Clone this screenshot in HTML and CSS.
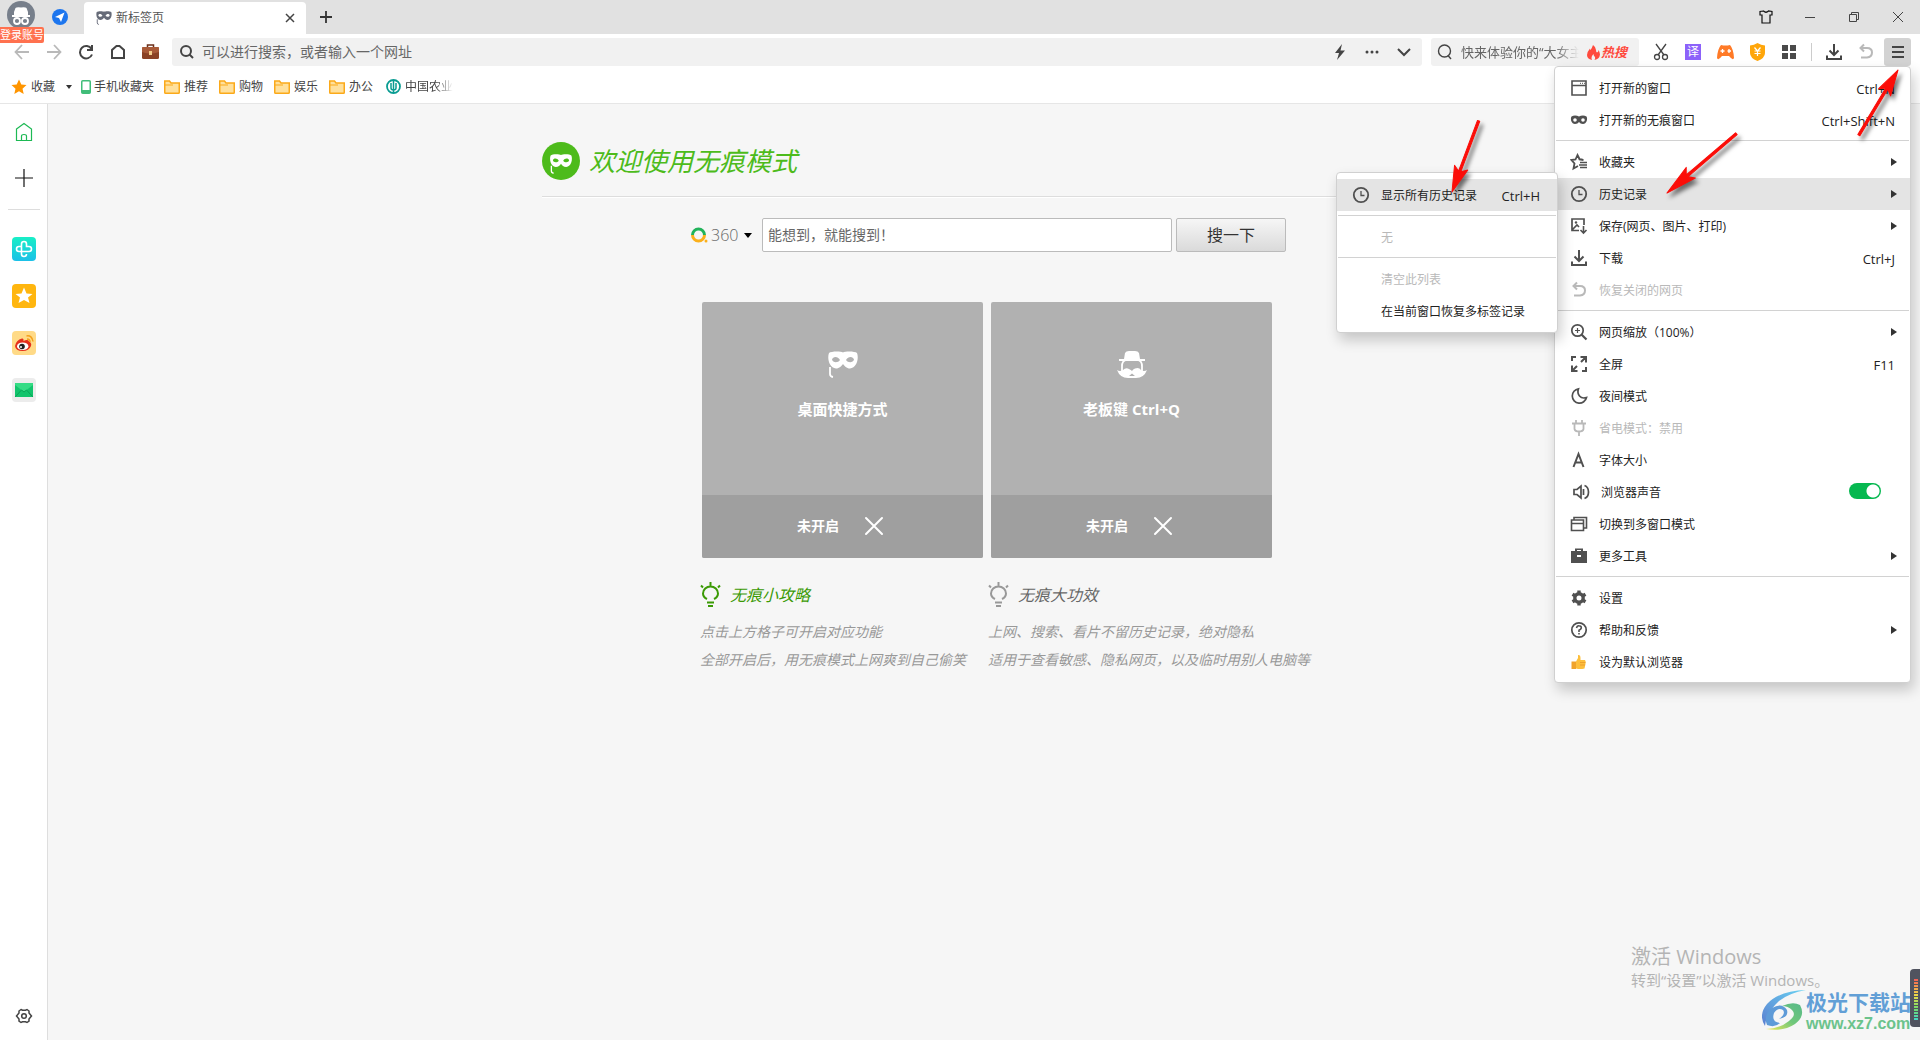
FILE: index.html
```html
<!DOCTYPE html>
<html lang="zh-CN">
<head>
<meta charset="utf-8">
<meta name="viewport" content="width=device-width, initial-scale=1">
<title>新标签页</title>
<link rel="stylesheet" href="styles.css">
</head>
<body>
<svg class="sprite" aria-hidden="true">
  <symbol id="mask" viewBox="0 0 30 27"><path fill="currentColor" fill-rule="evenodd" d="M1 2C3 0 13 0 15 1.500C17 0 27 0 29 2C31 7 29 17 22 17.500C18.500 17.500 16.500 15 15 13C13.500 15 11.500 17.500 8 17.500C1 17 -1 7 1 2ZM4 8.500C5 12 10 12 12 9C10 5 5 5 4 8.500ZM18 9C20 12 25 12 26 8.500C25 5 20 5 18 9Z"/><path d="M2 16V23Q2 25.500 5 26" fill="none" stroke="currentColor" stroke-width="1.800"/></symbol>
  <symbol id="goggles" viewBox="0 0 18 18"><path fill="currentColor" fill-rule="evenodd" d="M1.500 5.500C4 4 7 4.500 9 5.500C11 4.500 14 4 16.500 5.500C18 8 16.500 13 13 13C11 13 10 12 9 11C8 12 7 13 5 13C1.500 13 0 8 1.500 5.500ZM5 7.200A1.800 1.800 0 1 0 5 10.800A1.800 1.800 0 0 0 5 7.200ZM13 7.200A1.800 1.800 0 1 0 13 10.800A1.800 1.800 0 0 0 13 7.200Z"/></symbol>
  <symbol id="folder" viewBox="0 0 16 14"><path d="M.75 12.500V1H5.500L7 3H15.250V12.500Q15.250 13.250 14.500 13.250H1.500Q.75 13.250.75 12.500Z" fill="#ffe09c" stroke="#fba919" stroke-width="1.500"/><path d="M1 5H9" stroke="#fba919"/></symbol>
  <symbol id="search" viewBox="0 0 16 16"><circle cx="7" cy="7" r="5" fill="none" stroke="currentColor" stroke-width="2"/><path d="M10.500 10.500L14 14" stroke="currentColor" stroke-width="2"/></symbol>
  <symbol id="down" viewBox="0 0 18 18"><path d="M9 1V12M4.500 7.500L9 12L13.500 7.500M2 12.500V16H16V12.500" fill="none" stroke="currentColor" stroke-width="2"/></symbol>
  <symbol id="undo" viewBox="0 0 18 18"><path d="M7 1.500L3.500 5L7 8.500M4 5H10Q15 5 15 9.500T10 14.500H4" fill="none" stroke="currentColor" stroke-width="2"/></symbol>
  <symbol id="clock" viewBox="0 0 18 18"><circle cx="9" cy="9" r="7.200" fill="none" stroke="currentColor" stroke-width="1.800"/><path d="M9 5V9.500H12.500" fill="none" stroke="currentColor" stroke-width="1.300"/></symbol>
  <symbol id="bulb" viewBox="0 0 22 26"><g fill="none" stroke="currentColor" stroke-width="2"><path d="M7 17Q3 15 3 11.500A7.500 7 0 0 1 18 11.500Q18 15 14 17M7 20.500H14M8 24H13M10.500 0V3.500M1 3.500L3 5.500M20 3.500L18 5.500"/></g></symbol>
  <symbol id="x" viewBox="0 0 20 20"><path d="M2 2L18 18M18 2L2 18" stroke="currentColor" stroke-width="2" stroke-linecap="round"/></symbol>
</svg>

<header class="titlebar">
  <button class="account" aria-label="登录账号">
    <svg width="28" height="28" viewBox="0 0 28 28"><circle cx="14" cy="14" r="14" fill="#777f8b"/><path d="M7 14V11L8.500 7Q9.500 6 14 6.500Q18.500 6 19.500 7L21 11V14H23V16H5V14Z" fill="#fff"/><circle cx="10" cy="20" r="3" fill="none" stroke="#fff" stroke-width="1.800"/><circle cx="18" cy="20" r="3" fill="none" stroke="#fff" stroke-width="1.800"/></svg>
    <span class="login-tip">登录账号</span>
  </button>
  <button class="plane" aria-label="导航"><svg width="16" height="16" viewBox="0 0 16 16"><circle cx="8" cy="8" r="8" fill="#1d76ee"/><path d="M12.500 3.500L3 8L7 9L9 13Z" fill="#fff"/></svg></button>
  <div class="tab"><svg class="tab-icon" width="16" height="14"><use href="#mask"/></svg><span>新标签页</span><button aria-label="关闭标签"><svg width="10" height="10" viewBox="0 0 10 10"><path d="M1 1L9 9M9 1L1 9" stroke="#444" stroke-width="1.500"/></svg></button></div>
  <button class="newtab" aria-label="新建标签"><svg width="12" height="12" viewBox="0 0 12 12"><path d="M6 0V12M0 6H12" stroke="#333" stroke-width="1.800"/></svg></button>
  <div class="window-controls">
    <button aria-label="皮肤"><svg width="14" height="14" viewBox="0 0 14 14"><path d="M4.500 1L1 1.500V5H3V13H11V5H13V1.500L9.500 1Q7 3.500 4.500 1Z" fill="none" stroke="#111" stroke-width="1.200"/></svg></button>
    <button aria-label="最小化"><svg width="12" height="12" viewBox="0 0 12 12"><path d="M1 6.500H11" stroke="#444"/></svg></button>
    <button aria-label="还原"><svg width="12" height="12" viewBox="0 0 12 12"><path d="M1.500 3.500H8.500V10.500H1.500ZM3.500 3V1.500H10.500V8.500H9" fill="none" stroke="#444"/></svg></button>
    <button aria-label="关闭"><svg width="12" height="12" viewBox="0 0 12 12"><path d="M1 1L11 11M11 1L1 11" stroke="#444"/></svg></button>
  </div>
</header>

<div class="toolbar">
  <div class="nav">
    <button class="off" aria-label="后退"><svg width="16" height="16" viewBox="0 0 16 16"><path d="M8 1L1.500 8L8 15M2 8H15" fill="none" stroke="currentColor" stroke-width="1.800"/></svg></button>
    <button class="off" aria-label="前进"><svg width="16" height="16" viewBox="0 0 16 16"><path d="M8 1L14.500 8L8 15M14 8H1" fill="none" stroke="currentColor" stroke-width="1.800"/></svg></button>
    <button aria-label="刷新"><svg width="16" height="16" viewBox="0 0 16 16"><path d="M13.500 5A6.200 6.200 0 1 0 14 10.500M14 1V6H9" fill="none" stroke="currentColor" stroke-width="2"/></svg></button>
    <button aria-label="主页"><svg width="16" height="16" viewBox="0 0 16 16"><path d="M2 14V6L6.500 2H9.500L14 6V14Z" fill="none" stroke="currentColor" stroke-width="2"/></svg></button>
    <button aria-label="工具箱"><svg width="17" height="16" viewBox="0 0 17 16"><path d="M5.500 3V1H11.500V3" fill="none" stroke="#6b2f1a" stroke-width="1.500"/><rect x="0" y="3" width="17" height="12" rx="1.500" fill="#8a4225"/><path d="M0 4Q0 3 1 3H16Q17 3 17 4V8Q8 11 0 8Z" fill="#a85a38"/><rect x="7" y="7" width="3" height="4" fill="#f4cf8d"/></svg></button>
  </div>
  <div class="address">
    <svg width="16" height="16"><use href="#search"/></svg>
    <input type="text" aria-label="地址栏" placeholder="可以进行搜索，或者输入一个网址">
    <button aria-label="极速模式"><svg width="14" height="16" viewBox="0 0 14 16"><path d="M9 0L2 9H6L4 16L12 6.500H7.500Z" fill="#444"/></svg></button>
    <button aria-label="更多"><svg width="14" height="4" viewBox="0 0 14 4"><g fill="#444"><circle cx="2" cy="2" r="1.500"/><circle cx="7" cy="2" r="1.500"/><circle cx="12" cy="2" r="1.500"/></g></svg></button>
    <button aria-label="展开"><svg width="14" height="10" viewBox="0 0 14 10"><path d="M1 2L7 8L13 2" fill="none" stroke="#444" stroke-width="2"/></svg></button>
  </div>
  <div class="quick">
    <svg width="16" height="16" viewBox="0 0 16 16"><circle cx="7.500" cy="7" r="6" fill="none" stroke="#444" stroke-width="1.400"/><path d="M11 11.500L14 15" stroke="#444" stroke-width="1.400"/></svg>
    <input type="text" aria-label="搜索栏" placeholder="快来体验你的“大女主">
    <a href="#hot"><svg width="13" height="15" viewBox="0 0 13 15"><path d="M6 0Q5 3 3.500 5Q3 4.500 3 3.500Q0 7 0 10Q0 14 5 15Q3.500 12 6.500 9Q6.500 11 8 12Q8.500 13.500 7.500 15Q12.500 14 13 9.500Q12.500 6 11.500 5Q11.500 7 10 7.500Q9 7 9 5Q9 2 6 0Z" fill="#ff4a3d"/></svg>热搜</a>
  </div>
  <div class="tools">
    <button aria-label="截图"><svg width="16" height="18" viewBox="0 0 16 18"><g fill="none" stroke="#444" stroke-width="1.300"><path d="M3 1L11 12M13 1L5 12"/><circle cx="4" cy="14" r="2.500"/><circle cx="12" cy="14" r="2.500"/></g></svg></button>
    <button aria-label="翻译"><span class="translate">译</span></button>
    <button aria-label="游戏"><svg width="17" height="15" viewBox="0 0 17 15"><path d="M4 0Q8.500 1 13 0Q16.500 4 17 13Q16 16 12 11H5Q1 16 0 13Q.5 4 4 0Z" fill="#ff7a27"/><path d="M5.500 4V8M3.500 6H7.500M10.500 6H14M12 4V8" stroke="#fff" stroke-width="1.300"/></svg></button>
    <button aria-label="优惠"><svg width="15" height="18" viewBox="0 0 15 18"><path d="M7.500 0Q11 2 15 2.500V10Q15 15 7.500 18Q0 15 0 10V2.500Q4 2 7.500 0Z" fill="#ffa60a"/><path d="M4.500 4.500L7.500 8L10.500 4.500M4.500 8H10.500M4.500 10.500H10.500M7.500 8V13" fill="none" stroke="#fff" stroke-width="1.200"/></svg></button>
    <button aria-label="扩展"><svg width="14" height="16" viewBox="0 0 14 16"><path d="M0 1H6V7H0ZM8 1H14V7H8ZM0 9H6V15H0ZM8 9H14V15H8Z" fill="#4a4a4a"/></svg></button>
    <i class="divider"></i>
    <button aria-label="下载"><svg width="18" height="18"><use href="#down"/></svg></button>
    <button class="off" aria-label="恢复"><svg width="18" height="18"><use href="#undo"/></svg></button>
    <button class="menu-button" aria-label="菜单" aria-expanded="true"><svg width="12" height="14" viewBox="0 0 12 14"><path d="M0 2H12M0 7H12M0 12H12" stroke="#444" stroke-width="2"/></svg></button>
  </div>

  <nav class="menu" aria-label="主菜单">
    <button><svg viewBox="0 0 18 18"><path d="M2 2H16V16H2ZM2 6.500H16" fill="none" stroke="currentColor" stroke-width="1.600"/><path d="M10 4.300H15" stroke="currentColor" stroke-dasharray="1 1"/></svg><span>打开新的窗口</span><kbd>Ctrl+N</kbd></button>
    <button><svg><use href="#goggles"/></svg><span>打开新的无痕窗口</span><kbd>Ctrl+Shift+N</kbd></button>
    <hr>
    <button><svg viewBox="0 0 18 18"><path d="M12.500 6.500H9.800L7.500 2L5.500 6.500L1.500 7L4.500 10.500L3.500 15.500L8 13M7.500 2L9.500 6.500L13.500 7" fill="none" stroke="currentColor" stroke-width="1.800"/><path d="M10 9.500H17M9 12H17M10 14.500H17" stroke="currentColor" stroke-width="1.600"/></svg><span>收藏夹</span><i class="arrow"></i></button>
    <div class="has-sub">
      <button class="active" aria-expanded="true"><svg><use href="#clock"/></svg><span>历史记录</span><i class="arrow"></i></button>
      <div class="submenu">
        <button class="active"><svg><use href="#clock"/></svg><span>显示所有历史记录</span><kbd>Ctrl+H</kbd></button>
        <hr>
        <button disabled><svg></svg><span>无</span></button>
        <hr>
        <button disabled><svg></svg><span>清空此列表</span></button>
        <button><svg></svg><span>在当前窗口恢复多标签记录</span></button>
      </div>
    </div>
    <button><svg viewBox="0 0 18 18"><path d="M9 13.500H2V2H14V8M2 13L7 8L9 10" fill="none" stroke="currentColor" stroke-width="1.700"/><circle cx="6" cy="5.500" r="1.200" fill="currentColor"/><path d="M13.500 9V16M10.500 13L13.500 16L16.500 13" fill="none" stroke="currentColor" stroke-width="1.600"/></svg><span>保存(网页、图片、打印)</span><i class="arrow"></i></button>
    <button><svg><use href="#down"/></svg><span>下载</span><kbd>Ctrl+J</kbd></button>
    <button disabled><svg><use href="#undo"/></svg><span>恢复关闭的网页</span></button>
    <hr>
    <button><svg viewBox="0 0 18 18"><circle cx="7.500" cy="7.500" r="5.700" fill="none" stroke="currentColor" stroke-width="1.700"/><path d="M11.500 11.500L16.500 16.500" stroke="currentColor" stroke-width="2.200"/><path d="M7.500 5V10M5 7.500H10" stroke="currentColor" stroke-width="1.200"/></svg><span>网页缩放（100%）</span><i class="arrow"></i></button>
    <button><svg viewBox="0 0 18 18"><path d="M2 6V2H6M10.500 2H16V7.500M16 12V16H12M7.500 16H2V10.500M15.500 2.500L11 7M2.500 15.500L7 11" fill="none" stroke="currentColor" stroke-width="2"/></svg><span>全屏</span><kbd>F11</kbd></button>
    <button><svg viewBox="0 0 18 18"><path d="M8.500 1.800A7.200 7.200 0 1 0 16.500 10.500Q12 12 9.500 9T8.500 1.800Z" fill="none" stroke="currentColor" stroke-width="1.700"/></svg><span>夜间模式</span></button>
    <button disabled><svg viewBox="0 0 18 18"><path d="M2 4.500H16M4.500 5V10Q5 12.500 9 12.500Q13 12.500 13.500 10V5M6 1V5M12 1V5M9 12.500V17" fill="none" stroke="currentColor" stroke-width="1.800"/></svg><span>省电模式：禁用</span></button>
    <button><svg viewBox="0 0 18 18"><path d="M3.500 16L8.500 3L13.500 16M5 11.500H12" fill="none" stroke="currentColor" stroke-width="2"/></svg><span>字体大小</span></button>
    <label class="sound"><svg viewBox="0 0 18 18"><path d="M2 6.500H5L9 3V15L5 11.500H2Z" fill="none" stroke="currentColor" stroke-width="1.700"/><path d="M11.500 6V12M12.500 2.500Q16.500 4 16.500 9T12.500 15.500" fill="none" stroke="currentColor" stroke-width="1.700"/></svg><span>浏览器声音</span><input type="checkbox" checked></label>
    <button><svg viewBox="0 0 18 18"><path d="M1.500 5H13.500V15.500H1.500ZM4 4.500V2.500H16.500V13H14M1.500 8.500H13.500" fill="none" stroke="currentColor" stroke-width="1.600"/></svg><span>切换到多窗口模式</span></button>
    <button><svg viewBox="0 0 18 18"><path fill="currentColor" fill-rule="evenodd" d="M5 4V1.500H13V4H17V16H1V4ZM7 4H11V3H7ZM7 8V10H11V8Z"/></svg><span>更多工具</span><i class="arrow"></i></button>
    <hr>
    <button><svg viewBox="0 0 18 18"><circle cx="9" cy="9" r="4.200" fill="none" stroke="currentColor" stroke-width="3.400"/><path d="M9 1.500V4M9 14V16.500M2.500 5.200L4.700 6.500M13.300 11.500L15.500 12.800M2.500 12.800L4.700 11.500M13.300 6.500L15.500 5.200" stroke="currentColor" stroke-width="3.400"/></svg><span>设置</span></button>
    <button><svg viewBox="0 0 18 18"><circle cx="9" cy="9" r="7.200" fill="none" stroke="currentColor" stroke-width="1.700"/><path d="M6.500 7Q7 4.500 9 4.700Q11.500 4.800 11.300 7Q11 8.300 9 9.300V11M9 12V13.500" fill="none" stroke="currentColor" stroke-width="1.600"/></svg><span>帮助和反馈</span><i class="arrow"></i></button>
    <button><svg viewBox="0 0 18 18"><path d="M6 8.500L8 5V2Q10.500 1.500 10.500 5V7H15Q16 8 15.500 11L14.500 15.500Q10 16.500 6 15.500Z" fill="#fdbf3c"/><path d="M1.500 8.500H6V16H1.500Z" fill="#f0a32b"/><path d="M10 9.500H15.500M10 12H15" stroke="#e9982a" stroke-width=".8"/></svg><span>设为默认浏览器</span></button>
  </nav>
</div>

<nav class="bookmarks" aria-label="收藏栏">
  <a href="#fav" class="fav"><svg width="16" height="16" viewBox="0 0 16 16"><path d="M8 .5L10.300 5.500L15.500 6L11.500 9.700L12.700 15L8 12.200L3.300 15L4.500 9.700L.5 6L5.700 5.500Z" fill="#ff9500"/></svg>收藏</a>
  <button aria-label="展开收藏"></button>
  <a href="#phone" class="phone"><svg width="10" height="14" viewBox="0 0 10 14"><rect x=".75" y=".75" width="8.500" height="12.500" rx="1" fill="#fff" stroke="#41bd79" stroke-width="1.500"/><path d="M1 11.500H9" stroke="#41bd79" stroke-width="3"/></svg>手机收藏夹</a>
  <a href="#rec"><svg width="16" height="14"><use href="#folder"/></svg>推荐</a>
  <a href="#shop"><svg width="16" height="14"><use href="#folder"/></svg>购物</a>
  <a href="#fun"><svg width="16" height="14"><use href="#folder"/></svg>娱乐</a>
  <a href="#work"><svg width="16" height="14"><use href="#folder"/></svg>办公</a>
  <a href="#bank" class="bank"><svg width="15" height="15" viewBox="0 0 15 15"><circle cx="7.500" cy="7.500" r="6.500" fill="none" stroke="#0a9c92" stroke-width="1.800"/><path d="M7.500 1V14M5 4V9Q5 11 7.500 11Q10 11 10 9V4" fill="none" stroke="#0a9c92" stroke-width="1.500"/></svg><span>中国农业</span></a>
</nav>

<div class="body">
  <aside class="sidebar">
    <a href="#home" aria-label="首页"><svg width="18" height="20" viewBox="0 0 18 20"><path d="M1.500 7L9 1.500L16.500 7V18.500H1.500ZM6.500 18V14Q6.500 12.500 9 12.500T11.500 14V18" fill="none" stroke="#1db954" stroke-width="1.200"/></svg></a>
    <button aria-label="添加"><svg width="18" height="18" viewBox="0 0 18 18"><path d="M9 0V18M0 9H18" stroke="#111" stroke-width="1.200"/></svg></button>
    <hr>
    <div class="apps">
    <a href="#health" aria-label="健康"><svg width="24" height="24" viewBox="0 0 24 24"><defs><linearGradient id="g1" x2="0" y2="1"><stop stop-color="#18efc6"/><stop offset="1" stop-color="#1bc0e8"/></linearGradient></defs><rect width="24" height="24" rx="4" fill="url(#g1)"/><path d="M9.500 14V7Q9.500 4.500 12 4.500T14.500 7V9.500H17Q19.500 9.500 19.500 12T17 14.500H7Q4.500 14.500 4.500 12T7 9.500H9M9.500 14V17Q9.500 19.500 12 19.500T14.500 17" fill="none" stroke="#fff" stroke-width="1.600"/></svg></a>
    <a href="#star" aria-label="收藏夹"><svg width="24" height="24" viewBox="0 0 24 24"><rect width="24" height="24" rx="4" fill="#ffb60f"/><path d="M12 3.500L14.500 9.500L20.500 10L16 13.500L17.500 19L12 16L6.500 19L8 13.500L3.500 10L9.500 9.500Z" fill="#fff"/></svg></a>
    <a href="#weibo" aria-label="微博"><svg width="24" height="24" viewBox="0 0 24 24"><rect width="24" height="24" rx="4" fill="#ffda87"/><path d="M3 15Q4 9 10 7.500Q12 7 11.500 10Q16 8 17 10.500Q20 12 19 15Q17 20 10.500 20Q3.500 20 3 15Z" fill="#e5301c"/><ellipse cx="10.700" cy="15.200" rx="5.700" ry="3.800" fill="#fff"/><circle cx="10" cy="15.500" r="2.800" fill="#222"/><circle cx="9" cy="16" r="1" fill="#fff"/><path d="M14.500 5Q20 4 21 10.500M15 8Q18 8 18 11" fill="none" stroke="#f4a01c" stroke-width="1.500"/></svg></a>
    <a href="#mail" aria-label="邮箱"><svg width="24" height="24" viewBox="0 0 24 24"><rect width="24" height="24" rx="4" fill="#ececec"/><path d="M3 5H21V19H3Z" fill="#12c46c"/><path d="M3 5H21V7L12 14L3 7Z" fill="#35dc85"/><path d="M3 19L9.500 12L12 14L14.500 12L21 19" fill="none" stroke="#0aa457"/></svg></a>
    </div>
    <button class="gear" aria-label="设置"><svg width="18" height="18" viewBox="0 0 18 18"><path d="M6 2.500L7.500 3.200H10.500L12 2.500L14 4V6L16.500 9L14 12V14L12 15.500L10.500 14.800H7.500L6 15.500L4 14V12L1.500 9L4 6V4Z" fill="none" stroke="#444" stroke-width="1.500"/><circle cx="9" cy="9" r="2.300" fill="none" stroke="#444" stroke-width="1.500"/></svg></button>
  </aside>

  <main>
    <h1><svg width="38" height="38" viewBox="0 0 38 38"><circle cx="19" cy="19" r="19" fill="#4dbb1b"/><use href="#mask" x="7" y="12" width="24" height="20" color="#fff"/></svg>欢迎使用无痕模式</h1>
    <form class="search">
      <button type="button" class="engine"><svg width="17" height="16" viewBox="0 0 17 16"><path d="M1.500 8A6 6 0 0 1 13.500 8" fill="none" stroke="#21b35a" stroke-width="3"/><path d="M1.500 8A6 6 0 0 0 13.500 8" fill="none" stroke="#fbb01b" stroke-width="3"/><circle cx="15" cy="14" r="1.500" fill="#fbb01b"/></svg>360<i></i></button>
      <input type="text" aria-label="搜索" placeholder="能想到，就能搜到！">
      <button type="submit" class="go">搜一下</button>
    </form>
    <div class="cards">
      <section><div class="card-top"><svg width="30" height="27"><use href="#mask"/></svg><h2>桌面快捷方式</h2></div><button>未开启<svg width="20" height="20"><use href="#x"/></svg></button></section>
      <section><div class="card-top"><svg width="30" height="27" viewBox="0 0 30 27"><path d="M2 8H7L8 2Q9 0 12 0H18Q21 0 22 2L23 8H28V10H2Z" fill="#fff"/><path d="M5 21V15Q5 10 9 9H21Q25 10 25 15V21" fill="none" stroke="#fff" stroke-width="1.800"/><path fill="#fff" fill-rule="evenodd" d="M0 19Q3 21 6 19Q9 16 12 18Q14 19 15 20Q16 18 18 17.500Q22 16 24 19Q27 21 30 19Q27 27 19 27H11Q3 27 0 19ZM12 25H18L15 22.500Z"/></svg><h2>老板键 Ctrl+Q</h2></div><button>未开启<svg width="20" height="20"><use href="#x"/></svg></button></section>
    </div>
    <div class="tips">
      <section><h3 class="green"><svg width="22" height="26"><use href="#bulb"/></svg>无痕小攻略</h3><p>点击上方格子可开启对应功能</p><p>全部开启后，用无痕模式上网爽到自己偷笑</p></section>
      <section><h3><svg width="22" height="26"><use href="#bulb"/></svg>无痕大功效</h3><p>上网、搜索、看片不留历史记录，绝对隐私</p><p>适用于查看敏感、隐私网页，以及临时用别人电脑等</p></section>
    </div>
  </main>
</div>

<svg class="pointers" width="500" height="240" viewBox="0 0 500 240" aria-hidden="true">
  <defs><g id="pointer"><path d="M20 -1.200L76 -1.200V1.200L20 1.200ZM0 0L26 -7L21 0L26 7Z"/></g></defs>
  <g fill="#fb0d08" stroke="#fb0d08" stroke-linejoin="round">
    <use href="#pointer" transform="translate(478 70) rotate(121)"/>
    <use href="#pointer" transform="translate(247 193) rotate(-40.500) scale(1.200 1)"/>
    <use href="#pointer" transform="translate(32 192) rotate(-69.500)"/>
  </g>
</svg>
<div class="activate"><strong>激活 Windows</strong><span>转到“设置”以激活 Windows。</span></div>
<div class="site">
  <svg width="44" height="40" viewBox="0 0 44 40"><defs><linearGradient id="g2" x1="0" y1="1" x2="1" y2="0"><stop stop-color="#5b7fd0"/><stop offset="1" stop-color="#69d2f2"/></linearGradient><linearGradient id="g3" x1="0" y1="1" x2="1" y2="0"><stop stop-color="#f2ea55"/><stop offset=".5" stop-color="#70c77a"/><stop offset="1" stop-color="#57b989"/></linearGradient></defs><path d="M44 0Q17 1 5 14Q-4 25 3 36Q4 23 17 11Q27 3 44 0Z" fill="url(#g2)"/><path d="M5 35Q1 25 10 18Q20 12 25 20Q27 27 17 29Q24 24 21 20Q16 17 12 23Q9 32 18 33Q13 38 5 35Z" fill="#5e9bd8"/><path d="M38 15Q44 26 33 34Q21 42 4 39Q17 39 27 31Q35 25 30 20Q26 16 20 16Q31 11 38 15Z" fill="url(#g3)"/></svg>
  <div><b>极光下载站</b><span>www.xz7.com</span></div>
</div>
<div class="meter" aria-hidden="true"><i></i></div>
</body>
</html>
```
FILE: styles.css
```css
* { box-sizing: border-box; }
body { margin: 0; min-height: 100vh; display: flex; flex-direction: column; position: relative; overflow: hidden; background: #f6f6f6; color: #222; font: 12px/16px "Open Sans", "Noto Sans CJK SC", sans-serif; }
button, input { font: inherit; color: inherit; margin: 0; padding: 0; border: 0; background: none; outline: 0; }
button { display: flex; align-items: center; justify-content: center; }
a { color: inherit; text-decoration: none; display: flex; align-items: center; }
svg { flex: none; }
h1, h2, h3, p { margin: 0; font-weight: 400; }
.sprite { position: absolute; width: 0; height: 0; }
.off { color: #b9b9b9; }

.titlebar { height: 34px; background: #e1e1e1; display: flex; align-items: center; }
.account { width: 52px; height: 34px; position: relative; padding: 1px 0 5px 7px; justify-content: flex-start; }
.login-tip { position: absolute; left: 0; top: 27px; width: 44px; height: 16px; line-height: 16px; font-size: 11px; background: #ff714f; color: #fff; border-radius: 0 2px 2px 0; z-index: 2; text-align: center; white-space: nowrap; }
.plane { width: 16px; }
.tab { margin: 2px 0 0 16px; width: 222px; height: 32px; padding: 0 10px 0 12px; display: flex; align-items: center; gap: 4px; background: #fff; border-radius: 4px 4px 0 0; color: #555; }
.tab button { margin-left: auto; width: 12px; }
.tab-icon { color: #666b78; }
.newtab { width: 40px; height: 34px; }
.window-controls { margin-left: auto; display: flex; height: 28px; }
.window-controls button { width: 44px; }

.toolbar { position: relative; height: 36px; display: flex; align-items: center; background: #fff; padding: 0 9px 0 6px; color: #444; }
.nav { display: flex; width: 166px; }
.nav button { width: 32px; }
.address, .quick { height: 28px; background: #f1f1f1; border-radius: 3px; display: flex; align-items: center; font-size: 14px; }
.address { flex: 1; padding: 0 6px 0 7px; gap: 7px; }
.address input { flex: 1; }
input::placeholder { color: #666; opacity: 1; }
.address button { width: 25px; height: 28px; }
.quick { width: 208px; margin-left: 9px; padding: 0 8px 0 6px; gap: 8px; font-size: 13px; }
.quick input { width: 118px; mask-image: linear-gradient(90deg, #000 80%, transparent); }
.quick a { color: #ff4a3d; font-weight: 700; font-style: italic; gap: 1px; white-space: nowrap; }
.tools { display: flex; align-items: center; padding-left: 6px; }
.tools button { width: 32px; height: 28px; }
.translate { width: 16px; height: 16px; background: #8c62fa; color: #fff; }
.divider { width: 1px; height: 18px; background: #ccc; margin: 0 6px; }
.tools .menu-button { width: 27px; background: #d3d3d3; border-radius: 3px; margin-left: 2px; }

.menu, .submenu { position: absolute; z-index: 5; background: #fff; border: 1px solid #d0d0d0; border-radius: 4px; box-shadow: 3px 7px 14px #0003; color: #222; padding: 5px 0 4px; }
.menu { right: 9px; top: 32px; width: 357px; }
.menu button, .sound { width: 100%; height: 32px; display: flex; align-items: center; justify-content: flex-start; gap: 11px; padding: 0 15px; }
.menu span, kbd { padding-top: 1px; }
.menu svg { width: 18px; height: 18px; color: #505050; }
.menu hr { border: 0; border-top: 1px solid #d2d2d2; margin: 4px 1px 5px; }
.menu button:disabled, .menu button:disabled svg { color: #b9b9b9; }
.menu .active { background: #e4e4e4; }
kbd { font-family: inherit; font-size: 13px; margin-left: auto; }
.arrow { margin: 0 -2px 0 auto; border: solid transparent; border-width: 4px 0 4px 6px; border-left-color: #333; }
.has-sub { position: relative; }
.submenu { right: 352px; top: -6px; width: 222px; padding: 6px 0 5px; }
.submenu button { padding: 0 17px 0 15px; }
.menu .sound { padding-left: 17px; }
.sound input { appearance: none; width: 32px; height: 16px; border-radius: 8px; margin: 0 14px 2px auto; background: radial-gradient(circle at 24px 8px, #fff 6px, #06b850 7px); }

.bookmarks { height: 34px; background: #fff; border-bottom: 1px solid #e6e6e6; padding: 0 11px; display: flex; align-items: center; gap: 11px; color: #444; white-space: nowrap; }
.bookmarks a { gap: 4px; }
.bookmarks .phone { margin: 0 -1px 0 -2px; gap: 3px; }
.bookmarks button { border: solid transparent; border-width: 4px 3px 0; border-top-color: #333; }
.bank span { width: 48px; mask-image: linear-gradient(90deg, #000 65%, transparent); }
.bookmarks .bank { padding-left: 2px; }

.body { flex: 1; display: flex; }
.sidebar { width: 48px; background: #fff; border-right: 1px solid #dedede; display: flex; flex-direction: column; align-items: center; padding: 18px 0 15px; }
.sidebar > button { margin-top: 27px; }
.sidebar hr { width: 32px; border: 0; border-top: 1px solid #ddd; margin: 22px 0 27px; }
.apps { display: grid; gap: 23px; }
.sidebar .gear { margin-top: auto; }

main { width: 884px; margin: 0 auto; padding-top: 38px; }
h1 { display: flex; align-items: center; gap: 9px; height: 55px; padding-bottom: 17px; border-bottom: 1px solid #ddd; box-shadow: 0 1px #fff; color: #4dbb1b; font-size: 26px; line-height: 36px; font-style: italic; }
.search { display: flex; height: 34px; margin: 21px 0 0 149px; }
.engine { width: 68px; margin-right: 3px; gap: 3px; font-size: 16px; font-weight: 300; color: #666; justify-content: flex-start; }
.engine i { margin-left: 3px; border: solid transparent; border-width: 5px 4px 0; border-top-color: #000; }
.search input { width: 410px; background: #fff; border: 1px solid #bbb; border-radius: 2px; padding: 0 5px; font-size: 14px; }
.go { width: 110px; margin-left: 4px; border: 1px solid #bbb; border-radius: 2px; background: linear-gradient(#f6f6f6, #dadada); font-size: 16px; color: #333; }
.cards { display: flex; gap: 8px; margin: 50px 0 0 160px; color: #fff; font-weight: 700; }
.cards section { width: 281px; border-radius: 2px; overflow: hidden; background: #b1b1b1; }
.card-top { height: 193px; padding-top: 49px; display: flex; flex-direction: column; align-items: center; gap: 19px; }
h2 { font-size: 15px; line-height: 24px; font-weight: 700; }
.cards button { width: 100%; height: 63px; padding: 0 4px 2px 0; background: #9f9f9f; font-size: 14px; gap: 25px; }
.tips { display: flex; gap: 20px; margin: 21px 0 0 158px; font-style: italic; color: #999; }
.tips section { width: 268px; white-space: nowrap; }
.tips section:last-child { width: auto; }
h3 { display: flex; align-items: center; gap: 8px; height: 32px; color: #666; font-size: 16px; margin-bottom: 7px; }
h3 svg { color: #999; }
.green, .green svg { color: #3b9a05; }
.tips p { font-size: 14px; line-height: 28px; }

.pointers { position: absolute; top: 0; right: 0; z-index: 8; filter: drop-shadow(3px 4px 2px #0008); pointer-events: none; }
.activate { position: absolute; right: 93px; bottom: 50px; width: 196px; color: #b4b4b4; white-space: nowrap; }
.activate strong, .activate span { display: block; font-weight: 400; }
.activate strong { font-size: 20px; line-height: 26px; }
.activate span { font-size: 15px; line-height: 20px; }
.site { position: absolute; right: 9px; bottom: 7px; display: flex; align-items: center; }
.site svg { margin-bottom: 2px; }
.site b { display: block; font-size: 21px; line-height: 26px; color: #629fd6; }
.site span { display: block; font: 700 16px/18px "Liberation Sans", sans-serif; color: #6bc38c; }
.meter { position: absolute; right: 0; bottom: 13px; width: 10px; height: 58px; border-radius: 4px 0 0 4px; background: #50535f; padding: 10px 2px 6px 4px; }
.meter i { display: block; height: 42px; background: repeating-linear-gradient(transparent 0 2px, #50535f 2px 3px), linear-gradient(#f25c55, #f5a04c 20%, #e9dc49 40%, #74dc69 70%, #3fd6cf); }
```
